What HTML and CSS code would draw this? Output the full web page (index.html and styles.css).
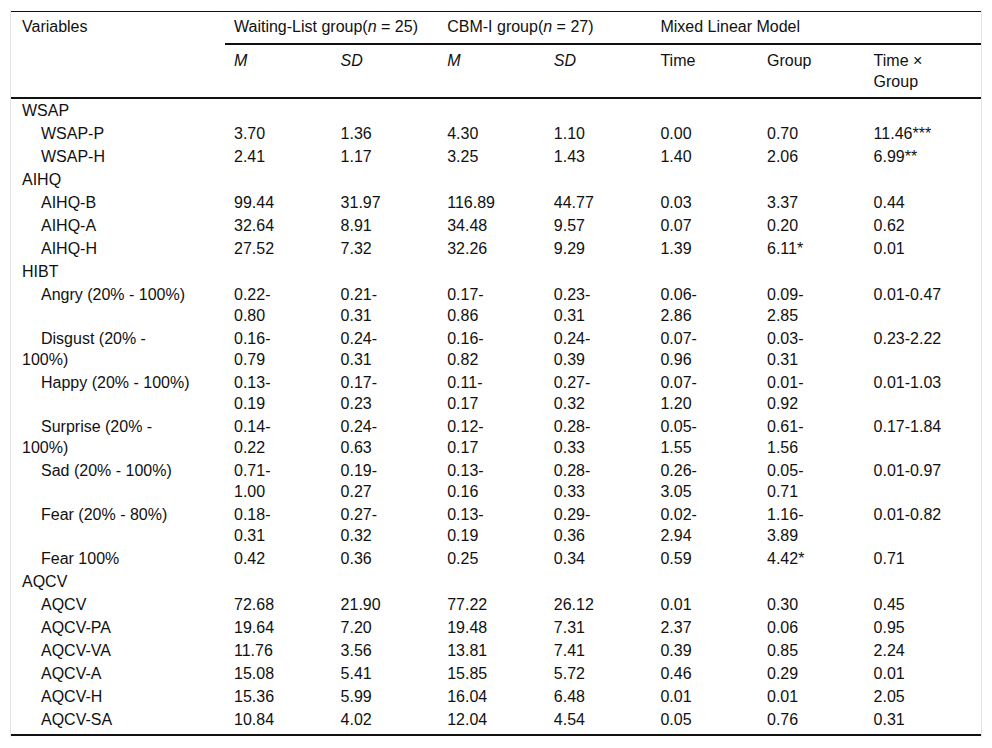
FILE: index.html
```html
<!DOCTYPE html>
<html>
<head>
<meta charset="utf-8">
<link rel="stylesheet" href="styles.css">
</head>
<body>
<div class="frame">
<table class="stats">
<colgroup>
<col class="c-var"><col class="c-num"><col class="c-num"><col class="c-num"><col class="c-num"><col class="c-num"><col class="c-num"><col class="c-last">
</colgroup>
<thead>
<tr class="h1">
<th rowspan="2" class="first">Variables</th>
<th colspan="2" class="grp">Waiting-List group(<i>n</i> = 25)</th>
<th colspan="2" class="grp">CBM-I group(<i>n</i> = 27)</th>
<th colspan="3" class="grp">Mixed Linear Model</th>
</tr>
<tr class="h2">
<th><i>M</i></th><th><i>SD</i></th><th><i>M</i></th><th><i>SD</i></th><th>Time</th><th>Group</th><th>Time ×<br>Group</th>
</tr>
</thead>
<tbody>
<tr class="sec"><td class="first">WSAP</td><td></td><td></td><td></td><td></td><td></td><td></td><td></td></tr>
<tr><td class="first sub">WSAP-P</td><td>3.70</td><td>1.36</td><td>4.30</td><td>1.10</td><td>0.00</td><td>0.70</td><td>11.46***</td></tr>
<tr><td class="first sub">WSAP-H</td><td>2.41</td><td>1.17</td><td>3.25</td><td>1.43</td><td>1.40</td><td>2.06</td><td>6.99**</td></tr>
<tr class="sec"><td class="first">AIHQ</td><td></td><td></td><td></td><td></td><td></td><td></td><td></td></tr>
<tr><td class="first sub">AIHQ-B</td><td>99.44</td><td>31.97</td><td>116.89</td><td>44.77</td><td>0.03</td><td>3.37</td><td>0.44</td></tr>
<tr><td class="first sub">AIHQ-A</td><td>32.64</td><td>8.91</td><td>34.48</td><td>9.57</td><td>0.07</td><td>0.20</td><td>0.62</td></tr>
<tr><td class="first sub">AIHQ-H</td><td>27.52</td><td>7.32</td><td>32.26</td><td>9.29</td><td>1.39</td><td>6.11*</td><td>0.01</td></tr>
<tr class="sec"><td class="first">HIBT</td><td></td><td></td><td></td><td></td><td></td><td></td><td></td></tr>
<tr><td class="first sub">Angry (20% - 100%)</td><td>0.22-<br>0.80</td><td>0.21-<br>0.31</td><td>0.17-<br>0.86</td><td>0.23-<br>0.31</td><td>0.06-<br>2.86</td><td>0.09-<br>2.85</td><td>0.01-0.47</td></tr>
<tr><td class="first sub">Disgust (20% -<br>100%)</td><td>0.16-<br>0.79</td><td>0.24-<br>0.31</td><td>0.16-<br>0.82</td><td>0.24-<br>0.39</td><td>0.07-<br>0.96</td><td>0.03-<br>0.31</td><td>0.23-2.22</td></tr>
<tr><td class="first sub">Happy (20% - 100%)</td><td>0.13-<br>0.19</td><td>0.17-<br>0.23</td><td>0.11-<br>0.17</td><td>0.27-<br>0.32</td><td>0.07-<br>1.20</td><td>0.01-<br>0.92</td><td>0.01-1.03</td></tr>
<tr><td class="first sub">Surprise (20% -<br>100%)</td><td>0.14-<br>0.22</td><td>0.24-<br>0.63</td><td>0.12-<br>0.17</td><td>0.28-<br>0.33</td><td>0.05-<br>1.55</td><td>0.61-<br>1.56</td><td>0.17-1.84</td></tr>
<tr><td class="first sub">Sad (20% - 100%)</td><td>0.71-<br>1.00</td><td>0.19-<br>0.27</td><td>0.13-<br>0.16</td><td>0.28-<br>0.33</td><td>0.26-<br>3.05</td><td>0.05-<br>0.71</td><td>0.01-0.97</td></tr>
<tr><td class="first sub">Fear (20% - 80%)</td><td>0.18-<br>0.31</td><td>0.27-<br>0.32</td><td>0.13-<br>0.19</td><td>0.29-<br>0.36</td><td>0.02-<br>2.94</td><td>1.16-<br>3.89</td><td>0.01-0.82</td></tr>
<tr><td class="first sub">Fear 100%</td><td>0.42</td><td>0.36</td><td>0.25</td><td>0.34</td><td>0.59</td><td>4.42*</td><td>0.71</td></tr>
<tr class="sec"><td class="first">AQCV</td><td></td><td></td><td></td><td></td><td></td><td></td><td></td></tr>
<tr><td class="first sub">AQCV</td><td>72.68</td><td>21.90</td><td>77.22</td><td>26.12</td><td>0.01</td><td>0.30</td><td>0.45</td></tr>
<tr><td class="first sub">AQCV-PA</td><td>19.64</td><td>7.20</td><td>19.48</td><td>7.31</td><td>2.37</td><td>0.06</td><td>0.95</td></tr>
<tr><td class="first sub">AQCV-VA</td><td>11.76</td><td>3.56</td><td>13.81</td><td>7.41</td><td>0.39</td><td>0.85</td><td>2.24</td></tr>
<tr><td class="first sub">AQCV-A</td><td>15.08</td><td>5.41</td><td>15.85</td><td>5.72</td><td>0.46</td><td>0.29</td><td>0.01</td></tr>
<tr><td class="first sub">AQCV-H</td><td>15.36</td><td>5.99</td><td>16.04</td><td>6.48</td><td>0.01</td><td>0.01</td><td>2.05</td></tr>
<tr class="last"><td class="first sub">AQCV-SA</td><td>10.84</td><td>4.02</td><td>12.04</td><td>4.54</td><td>0.05</td><td>0.76</td><td>0.31</td></tr>
</tbody>
</table>
</div>
</body>
</html>
```

FILE: styles.css
```css
html, body {
  margin: 0;
  padding: 0;
  background: #ffffff;
}

body {
  font-family: "Liberation Sans", Arial, sans-serif;
  font-size: 16px;
  color: #111111;
}

.frame {
  margin: 10px 10px 0 10px;
  width: 970px;
  padding-top: 1px;
  padding-bottom: 1px;
  border-left: 1px solid #e4e4e4;
  border-right: 1px solid #e4e4e4;
}

.stats {
  width: 970px;
  table-layout: fixed;
  border-collapse: collapse;
  border-top: 1px solid #111111;
  border-bottom: 2px solid #111111;
}

.c-var { width: 214px; }
.c-num { width: 106.6px; }
.c-last { width: 116.4px; }

.stats th,
.stats td {
  text-align: left;
  vertical-align: top;
  font-weight: normal;
  line-height: 21px;
  padding: 0 0 0 9px;
}

.stats th.first,
.stats td.first {
  padding-left: 11px;
}

.stats td.sub {
  text-indent: 19px;
}

.h1 th {
  padding-top: 4px;
  padding-bottom: 6px;
}

.h1 th.grp,
.h1 th.first {
  border-bottom: 2px solid #111111;
}

.h2 th {
  padding-top: 5px;
  padding-bottom: 5px;
  border-bottom: 2px solid #111111;
}

.stats tbody td {
  padding-top: 1px;
  padding-bottom: 1px;
}

.stats tbody tr.last td {
  padding-bottom: 4px;
}
```
